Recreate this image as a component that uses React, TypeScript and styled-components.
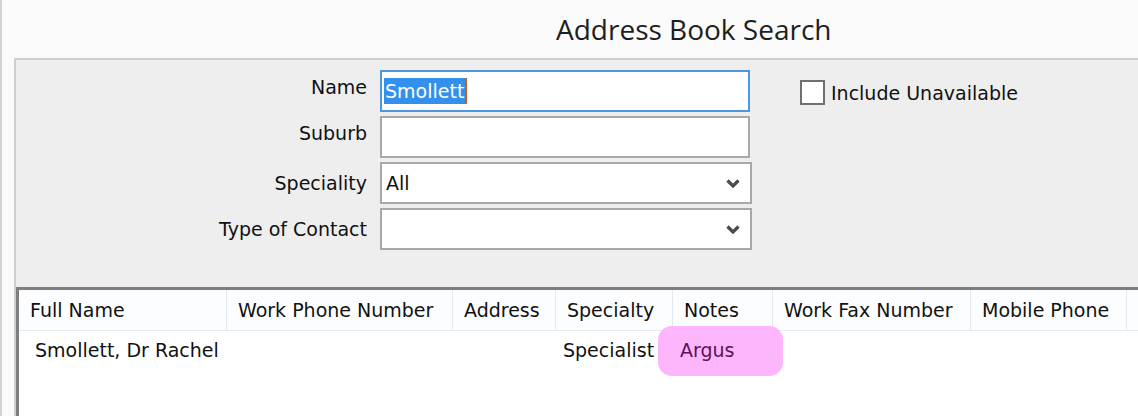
import React from "react";
import styled, { createGlobalStyle } from "styled-components";

const GlobalStyle = createGlobalStyle`
  html, body {
    margin: 0;
    padding: 0;
    background: #fafafa;
  }
  * {
    box-sizing: border-box;
  }
`;

const COLUMNS = "208px 226px 103px 117px 100px 198px 156px 1fr";

const Window = styled.div`
  display: flex;
  flex-direction: column;
  width: 1138px;
  height: 416px;
  overflow: hidden;
  background: #fafafa;
  border-left: 2px solid #d2d2d2;
  font-family: "DejaVu Sans", Verdana, sans-serif;
  font-size: 19px;
  color: #111;
`;

const TitleBar = styled.div`
  display: flex;
  align-items: center;
  height: 58px;
  padding-left: 554px;
`;

const Title = styled.h1`
  margin: 0;
  font-family: "Open Sans", sans-serif;
  font-weight: 400;
  font-size: 28px;
  line-height: 1;
  color: #1e1e1e;
  white-space: nowrap;
`;

const Body = styled.div`
  flex: 1;
  min-height: 0;
  display: flex;
  flex-direction: column;
  margin-left: 12px;
  background: #eeeeee;
  border-top: 2px solid #cdcdcd;
  border-left: 2px solid #cdcdcd;
`;

const SearchForm = styled.div`
  height: 227px;
  padding-top: 10px;
  display: grid;
  grid-template-columns: 351px 372px 1fr;
  grid-auto-rows: 42px;
  column-gap: 13px;
  row-gap: 4px;
  align-content: start;
`;

const Label = styled.div<{ $raise?: boolean }>`
  display: flex;
  align-items: center;
  justify-content: flex-end;
  padding-bottom: ${(p) => (p.$raise ? "8px" : "0")};
  white-space: nowrap;
`;

const Field = styled.div<{ $focused?: boolean; $select?: boolean }>`
  display: flex;
  align-items: center;
  width: ${(p) => (p.$select ? "372px" : "370px")};
  height: 42px;
  padding-left: ${(p) => (p.$select ? "4px" : "2px")};
  padding-right: 10px;
  background: #fff;
  border: 2px solid ${(p) => (p.$focused ? "#4d96e2" : "#a8a8a8")};
`;

const Selected = styled.span`
  display: inline-block;
  height: 26px;
  line-height: 26px;
  padding: 0 1px;
  background: #3390ec;
  color: #fff;
`;

const Caret = styled.span`
  display: inline-block;
  width: 2px;
  height: 26px;
  background: #c0601a;
`;

const FieldValue = styled.span`
  flex: 1;
`;

const CheckCell = styled.label`
  grid-column: 3;
  grid-row: 1;
  display: flex;
  align-items: center;
  gap: 6px;
  padding-left: 35px;
  padding-top: 3px;
  white-space: nowrap;
`;

const CheckBox = styled.span`
  width: 25px;
  height: 25px;
  background: #fff;
  border: 2px solid #707070;
`;

const ResultList = styled.div`
  flex: 1;
  background: #fff;
  border-top: 3px solid #7e7e7e;
  border-left: 3px solid #7e7e7e;
`;

const HeaderRow = styled.div`
  display: grid;
  grid-template-columns: ${COLUMNS};
  height: 41px;
  background: #fcfdfe;
  border-bottom: 1px solid #e3eaf3;
`;

const HeaderCell = styled.div`
  display: flex;
  align-items: center;
  padding-left: 11px;
  border-right: 1px solid #e2e8f0;
  white-space: nowrap;
  overflow: hidden;
`;

const DataRow = styled.div`
  display: grid;
  grid-template-columns: ${COLUMNS};
  height: 38px;
`;

const DataCell = styled.div<{ $indent?: number }>`
  position: relative;
  display: flex;
  align-items: center;
  padding-left: ${(p) => p.$indent ?? 7}px;
  white-space: nowrap;
`;

const Marker = styled.span`
  position: absolute;
  left: -15px;
  top: -5px;
  width: 125px;
  height: 50px;
  border-radius: 14px;
  background: #fdb5fc;
`;

const MarkedText = styled.span`
  position: relative;
  z-index: 1;
  color: #5a1258;
`;

const Chevron = () => (
  <svg width="14" height="9" viewBox="0 0 14 9">
    <path d="M1.5 1.5 L7 7 L12.5 1.5" fill="none" stroke="#4b4b4b" strokeWidth="3.2" />
  </svg>
);

const headers = [
  "Full Name",
  "Work Phone Number",
  "Address",
  "Specialty",
  "Notes",
  "Work Fax Number",
  "Mobile Phone",
  "",
];

export default function App() {
  return (
    <>
      <GlobalStyle />
      <Window>
        <TitleBar>
          <Title>Address Book Search</Title>
        </TitleBar>
        <Body>
          <SearchForm>
            <Label $raise>Name</Label>
            <Field $focused>
              <Selected>Smollett</Selected>
              <Caret />
            </Field>
            <CheckCell>
              <CheckBox />
              Include Unavailable
            </CheckCell>

            <Label $raise>Suburb</Label>
            <Field />
            <span />

            <Label>Speciality</Label>
            <Field $select>
              <FieldValue>All</FieldValue>
              <Chevron />
            </Field>
            <span />

            <Label>Type of Contact</Label>
            <Field $select>
              <FieldValue />
              <Chevron />
            </Field>
          </SearchForm>

          <ResultList>
            <HeaderRow>
              {headers.map((h, i) => (
                <HeaderCell key={i}>{h}</HeaderCell>
              ))}
            </HeaderRow>
            <DataRow>
              <DataCell $indent={16}>Smollett, Dr Rachel</DataCell>
              <DataCell />
              <DataCell />
              <DataCell>Specialist</DataCell>
              <DataCell>
                <Marker />
                <MarkedText>Argus</MarkedText>
              </DataCell>
              <DataCell />
              <DataCell />
              <DataCell />
            </DataRow>
          </ResultList>
        </Body>
      </Window>
    </>
  );
}
